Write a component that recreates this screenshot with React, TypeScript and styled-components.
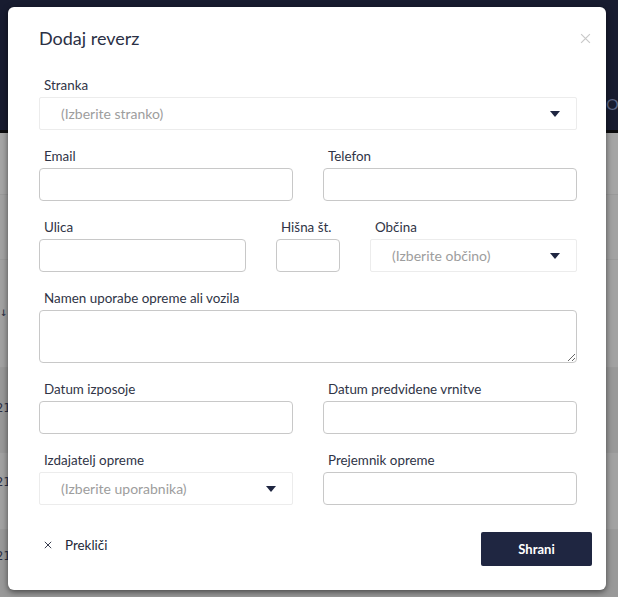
import React from "react";
import styled, { createGlobalStyle } from "styled-components";

const GlobalStyle = createGlobalStyle`
  html, body { margin: 0; padding: 0; }
  body {
    font-family: Lato, "Noto Sans", sans-serif;
    width: 618px;
    height: 597px;
    overflow: hidden;
    background: #a2a2a2;
  }
  * { box-sizing: border-box; }
`;

const Page = styled.div`
  position: relative;
  width: 618px;
  height: 597px;
  display: flex;
  flex-direction: column;
  overflow: hidden;
`;

const TopBar = styled.div`
  height: 133px;
  background: #181c30;
  display: flex;
  justify-content: flex-end;
  align-items: flex-start;
  padding-top: 93px;
  border-bottom: 3px solid #0b0b0d;
  flex: none;
`;

const NavText = styled.span`
  color: #5d6785;
  font-size: 16px;
  width: 12px;
  line-height: 22px;
`;

const Row = styled.div<{ $h: number; $bg: string; $pt?: number; $indent?: number }>`
  height: ${(p) => p.$h}px;
  background: ${(p) => p.$bg};
  border-bottom: 1px solid #9a9a9a;
  padding-top: ${(p) => p.$pt ?? 0}px;
  text-indent: ${(p) => p.$indent ?? 0}px;
  line-height: 14px;
  flex: none;
  color: #2a2f45;
  font-family: "DejaVu Sans Mono", monospace;
  font-size: 12px;
`;

const Modal = styled.div`
  position: absolute;
  left: 8px;
  top: 7px;
  width: 598px;
  height: 583px;
  background: #fff;
  border-radius: 6px;
  box-shadow: 0 2px 6px rgba(0, 0, 0, 0.55);
  padding: 19px 29px 0 31px;
  display: flex;
  flex-direction: column;
`;

const Header = styled.div`
  display: flex;
  justify-content: space-between;
  align-items: center;
  margin-right: -15px;
  height: 24px;
`;

const Title = styled.h2`
  margin: 0;
  font-weight: 400;
  font-size: 18px;
  color: #2b3045;
  line-height: 24px;
`;

const Close = styled.button`
  border: none;
  background: none;
  padding: 0;
  width: 14px;
  height: 14px;
  display: flex;
  align-items: center;
  justify-content: center;
  cursor: pointer;
`;

const Form = styled.div`
  margin-top: 26px;
  display: flex;
  flex-direction: column;
  gap: 17px;
`;

const Grid = styled.div<{ $cols: string }>`
  display: grid;
  grid-template-columns: ${(p) => p.$cols};
  column-gap: 30px;
`;

const Field = styled.div`
  display: flex;
  flex-direction: column;
  min-width: 0;
`;

const Label = styled.label`
  font-size: 13.4px;
  line-height: 18px;
  color: #2f3446;
  padding-left: 5px;
  margin-bottom: 3px;
  white-space: nowrap;
`;

const Input = styled.input`
  height: 33px;
  width: 100%;
  border: 1px solid #c8c8c8;
  border-radius: 4px;
  background: #fff;
  font-family: inherit;
  font-size: 14px;
  padding: 0 10px;
  outline: none;
`;

const TextArea = styled.textarea`
  height: 53px;
  width: 100%;
  border: 1px solid #c8c8c8;
  border-radius: 4px;
  font-family: inherit;
  font-size: 14px;
  padding: 6px 10px;
  outline: none;
  display: block;
`;

const Select = styled.div`
  height: 33px;
  border: 1px solid #ececec;
  border-radius: 2px;
  display: flex;
  align-items: center;
  justify-content: space-between;
  padding: 0 16px 0 21px;
  font-size: 14px;
  color: #9d9d9d;
  cursor: pointer;
`;

const Caret = styled.span`
  width: 0;
  height: 0;
  border-left: 5px solid transparent;
  border-right: 5px solid transparent;
  border-top: 6px solid #1f2641;
`;

const Footer = styled.div`
  margin-top: 27px;
  margin-right: -15px;
  display: flex;
  justify-content: space-between;
  align-items: center;
`;

const Cancel = styled.button`
  border: none;
  background: none;
  display: flex;
  align-items: center;
  gap: 13px;
  padding: 0 0 8px 5px;
  font-family: inherit;
  font-size: 13.4px;
  font-weight: 400;
  color: #232839;
  cursor: pointer;
`;

const Save = styled.button`
  width: 111px;
  height: 34px;
  border: none;
  border-radius: 2px;
  background: #1f2641;
  color: #fff;
  font-family: inherit;
  font-size: 13px;
  font-weight: 700;
  cursor: pointer;
`;

const XIcon = ({ size, color, w }: { size: number; color: string; w: number }) => (
  <svg width={size} height={size} viewBox="0 0 10 10">
    <path d="M1 1 L9 9 M9 1 L1 9" stroke={color} strokeWidth={w} fill="none" />
  </svg>
);

const SelectBox = ({ text }: { text: string }) => (
  <Select>
    <span>{text}</span>
    <Caret />
  </Select>
);

export default function App() {
  return (
    <>
      <GlobalStyle />
      <Page>
        <TopBar>
          <NavText>O</NavText>
        </TopBar>
        <Row $h={62} $bg="#a5a5a5" />
        <Row $h={65} $bg="#a2a2a2" />
        <Row $h={108} $bg="#a2a2a2" $pt={45}>↓</Row>
        <Row $h={85} $bg="#999999" $pt={33} $indent={-4}>21</Row>
        <Row $h={77} $bg="#a2a2a2" $pt={22} $indent={-4}>21</Row>
        <Row $h={67} $bg="#999999" $pt={19} $indent={-4}>21</Row>
        <Modal>
          <Header>
            <Title>Dodaj reverz</Title>
            <Close aria-label="Zapri">
              <XIcon size={11} color="#c9c9c9" w={1.1} />
            </Close>
          </Header>
          <Form>
            <Field>
              <Label>Stranka</Label>
              <SelectBox text="(Izberite stranko)" />
            </Field>
            <Grid $cols="1fr 1fr">
              <Field>
                <Label>Email</Label>
                <Input />
              </Field>
              <Field>
                <Label>Telefon</Label>
                <Input />
              </Field>
            </Grid>
            <Grid $cols="207px 64px 1fr">
              <Field>
                <Label>Ulica</Label>
                <Input />
              </Field>
              <Field>
                <Label>Hišna št.</Label>
                <Input />
              </Field>
              <Field>
                <Label>Občina</Label>
                <SelectBox text="(Izberite občino)" />
              </Field>
            </Grid>
            <Field>
              <Label>Namen uporabe opreme ali vozila</Label>
              <TextArea />
            </Field>
            <Grid $cols="1fr 1fr">
              <Field>
                <Label>Datum izposoje</Label>
                <Input />
              </Field>
              <Field>
                <Label>Datum predvidene vrnitve</Label>
                <Input />
              </Field>
            </Grid>
            <Grid $cols="1fr 1fr">
              <Field>
                <Label>Izdajatelj opreme</Label>
                <SelectBox text="(Izberite uporabnika)" />
              </Field>
              <Field>
                <Label>Prejemnik opreme</Label>
                <Input />
              </Field>
            </Grid>
          </Form>
          <Footer>
            <Cancel>
              <XIcon size={8} color="#2f3446" w={1.2} />
              Prekliči
            </Cancel>
            <Save>Shrani</Save>
          </Footer>
        </Modal>
      </Page>
    </>
  );
}
